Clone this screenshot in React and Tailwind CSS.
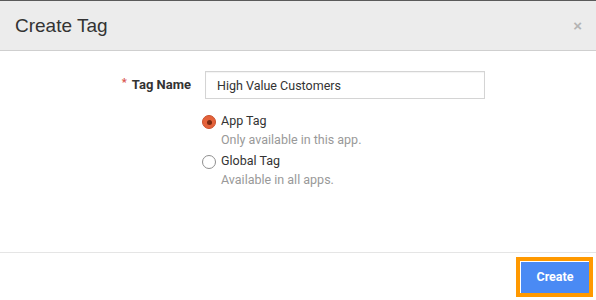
import { useState } from 'react';

export default function App() {
  const [tipo, setTipo] = useState('app');
  const [nombre, setNombre] = useState('High Value Customers');

  return (
    <div className="w-[596px] h-[300px] bg-white flex flex-col overflow-hidden font-['Roboto',sans-serif]">
      <div className="h-px bg-[#5a5a5a] shrink-0" />
      {/* CABECERA */}
      <div className="h-[50px] bg-[#ececec] border-b border-[#cfcfcf] flex items-center justify-between pl-[15px] pr-[14px] shrink-0">
        <h3 className="text-[19px] text-[#333] font-['Liberation_Sans',Arial,sans-serif] leading-none">Create Tag</h3>
        <button className="text-[#b4b4b4] text-[15px] font-bold leading-none font-['Liberation_Sans',Arial,sans-serif]">×</button>
      </div>

      {/* CUERPO */}
      <div className="flex-1 pt-[20px]">
        <div className="flex items-center">
          <label className="w-[191px] text-right text-[13px] font-bold text-[#333]">
            <span className="text-[#d9534f] mr-[5px] align-top text-[11px]">*</span>Tag Name
          </label>
          <input
            type="text"
            value={nombre}
            onChange={(e) => setNombre(e.target.value)}
            className="ml-[14px] w-[280px] h-[28px] border border-[#d4d4d4] px-[11px] text-[12.5px] text-[#333] outline-none shadow-[inset_0_1px_1px_rgba(0,0,0,0.05)]"
          />
        </div>

        <div className="pl-[202px] mt-[16px] flex flex-col gap-[9px]">
          <Opcion activa={tipo === 'app'} onClick={() => setTipo('app')} titulo="App Tag" sub="Only available in this app." />
          <Opcion activa={tipo === 'global'} onClick={() => setTipo('global')} titulo="Global Tag" sub="Available in all apps." />
        </div>
      </div>

      {/* PIE */}
      <div className="h-[48px] border-t border-[#e5e5e5] flex items-center justify-end pr-[3px] shrink-0">
        <div className="border-[4px] border-[#ff9900] bg-white pt-px pl-px mt-[1px]">
          <button className="w-[68px] h-[31px] bg-[#4a8af4] text-white text-[12.5px] font-bold">Create</button>
        </div>
      </div>
    </div>
  );
}

function Opcion({ activa, onClick, titulo, sub }) {
  return (
    <div className="flex items-start cursor-pointer" onClick={onClick}>
      <span
        className={
          activa
            ? 'mt-[0px] w-[14px] h-[14px] rounded-full bg-[#e4623a] border border-[#c9502c] flex items-center justify-center shrink-0'
            : 'mt-[0px] w-[14px] h-[14px] rounded-full bg-white border border-[#8f8f8f] shrink-0'
        }
      >
        {activa && <span className="w-[5px] h-[5px] rounded-full bg-[#7a2a12]" />}
      </span>
      <div className="ml-[5px] leading-none">
        <div className="text-[12.5px] text-[#333]">{titulo}</div>
        <div className="text-[12.5px] text-[#999] mt-[6px]">{sub}</div>
      </div>
    </div>
  );
}
